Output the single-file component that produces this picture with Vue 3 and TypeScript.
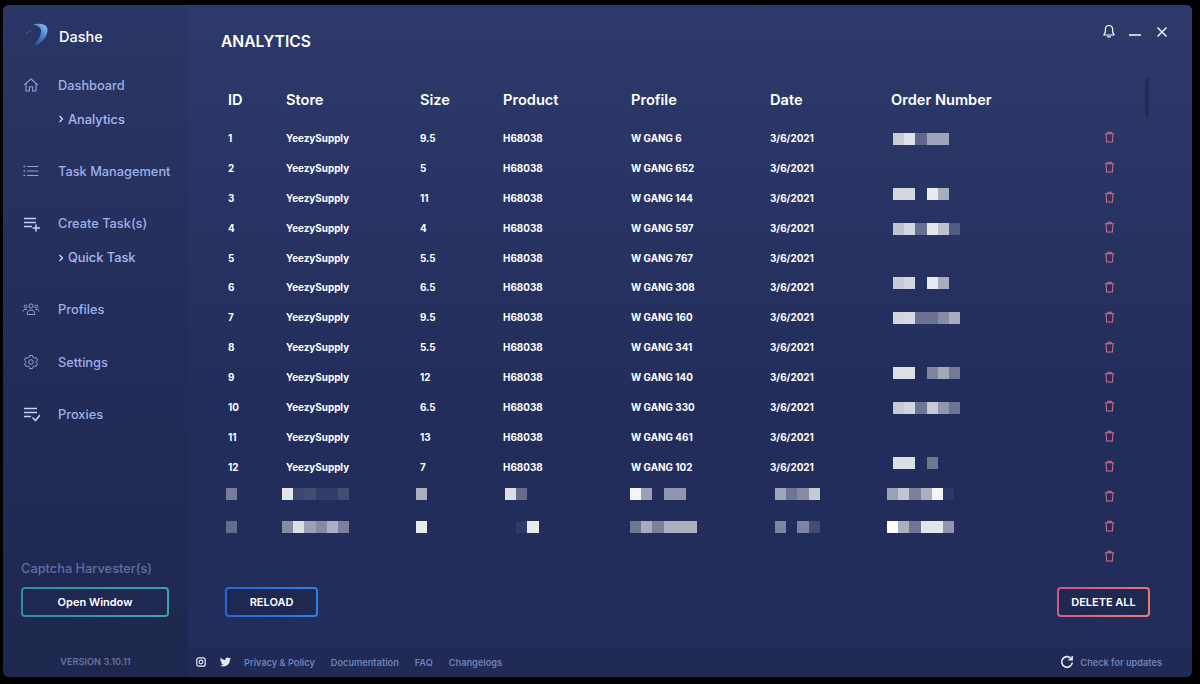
<script setup lang="ts">
interface Mosaic {
  offset: number
  cells: number[]
}

interface Row {
  id: number
  size: string
  profile: string
  order: number[]
  shift?: number
}

const columns = ['ID', 'Store', 'Size', 'Product', 'Profile', 'Date', 'Order Number']

const rows: Row[] = [
  { id: 1, size: '9.5', profile: 'W GANG 6', order: [0.75, 0.85, 0.25, 0.55, 0.55], shift: 1 },
  { id: 2, size: '5', profile: 'W GANG 652', order: [] },
  { id: 3, size: '11', profile: 'W GANG 144', order: [0.8, 0.8, 0, 0.9, 0.6], shift: -4 },
  { id: 4, size: '4', profile: 'W GANG 597', order: [0.7, 0.8, 0.3, 0.88, 0.7, 0.2], shift: 1 },
  { id: 5, size: '5.5', profile: 'W GANG 767', order: [] },
  { id: 6, size: '6.5', profile: 'W GANG 308', order: [0.75, 0.8, 0, 0.9, 0.6], shift: -4 },
  { id: 7, size: '9.5', profile: 'W GANG 160', order: [0.8, 0.82, 0.32, 0.32, 0.45, 0.6], shift: 1 },
  { id: 8, size: '5.5', profile: 'W GANG 341', order: [] },
  { id: 9, size: '12', profile: 'W GANG 140', order: [0.85, 0.85, 0, 0.42, 0.58, 0.36], shift: -4 },
  { id: 10, size: '6.5', profile: 'W GANG 330', order: [0.75, 0.8, 0.35, 0.75, 0.5, 0.35], shift: 1 },
  { id: 11, size: '13', profile: 'W GANG 461', order: [] },
  { id: 12, size: '7', profile: 'W GANG 102', order: [0.85, 0.85, 0, 0.35], shift: -4 }
]

// redacted rows at the end of the table, one mosaic per column
const blurred: { shift: number; cols: Mosaic[] }[] = [
  {
    shift: -3,
    cols: [
      { offset: -2, cells: [0.38] },
      { offset: -4, cells: [0.88, 0.12, 0.15, 0.08, 0.08, 0.15] },
      { offset: -4, cells: [0.62] },
      { offset: 2, cells: [0.85, 0.3] },
      { offset: -1, cells: [0.95, 0.55, 0, 0.5, 0.5] },
      { offset: 5, cells: [0.58, 0.35, 0.45, 0.75] },
      { offset: -4, cells: [0.55, 0.72, 0.4, 0.62, 0.95, 0.05] }
    ]
  },
  {
    shift: 0,
    cols: [
      { offset: -2, cells: [0.3] },
      { offset: -4, cells: [0.45, 0.85, 0.55, 0.45, 0.62, 0.4] },
      { offset: -4, cells: [0.9] },
      { offset: 2, cells: [0, 0.06, 0.9] },
      { offset: -1, cells: [0.35, 0.6, 0.4, 0.62, 0.62, 0.62] },
      { offset: 5, cells: [0.42, 0, 0.42, 0.15] },
      { offset: -4, cells: [1, 0.62, 0.35, 0.88, 0.88, 0.5] }
    ]
  }
]

const nav = [
  { label: 'Dashboard', icon: 'home', sub: 'Analytics' },
  { label: 'Task Management', icon: 'list' },
  { label: 'Create Task(s)', icon: 'add', sub: 'Quick Task' },
  { label: 'Profiles', icon: 'users' },
  { label: 'Settings', icon: 'gear' },
  { label: 'Proxies', icon: 'check' }
]

const links = ['Privacy & Policy', 'Documentation', 'FAQ', 'Changelogs']

function cellColor(alpha: number): string {
  return `rgba(255, 255, 255, ${alpha})`
}
</script>

<template>
  <div class="window">
    <aside class="sidebar">
      <div class="brand">
        <svg class="logo" width="26" height="26" viewBox="0 0 26 26">
          <defs>
            <linearGradient id="swoosh" x1="0.9" y1="0" x2="0.2" y2="1">
              <stop offset="0" stop-color="#8fc0f0" />
              <stop offset="0.5" stop-color="#3f7cc8" />
              <stop offset="1" stop-color="#2a4474" />
            </linearGradient>
          </defs>
          <path d="M9 1.500C15 0 23 0.500 23.500 6.500C24 13 17.500 21 8 24.500C13 18.500 17.500 12.500 17 7.500C16.600 4 13.500 2.500 9 1.500Z" fill="url(#swoosh)" />
          <path d="M1 11C3 9 5.500 7.500 8 7C6 8.500 3.500 10 1 11Z" fill="#46689e" />
        </svg>
        <span>Dashe</span>
      </div>

      <nav class="nav">
        <div v-for="item in nav" :key="item.label" class="nav-group">
          <div class="nav-item">
            <span class="nav-icon">
              <svg v-if="item.icon === 'home'" width="18" height="18" viewBox="0 0 18 18" fill="none" stroke="currentColor" stroke-width="1.100" stroke-linejoin="round" stroke-linecap="round">
                <path d="M2.500 8.600L9 3l6.500 5.600" />
                <path d="M4 7.600V15h3.400v-4.200h3.200V15H14V7.600" />
              </svg>
              <svg v-else-if="item.icon === 'list'" width="18" height="18" viewBox="0 0 18 18" fill="none" stroke="currentColor" stroke-width="1.100" stroke-linecap="round">
                <path d="M5.500 4.500H16M5.500 9H16M5.500 13.500H16" />
                <path d="M2 4.500h.6M2 9h.6M2 13.500h.6" stroke-width="1.400" />
              </svg>
              <svg v-else-if="item.icon === 'add'" width="18" height="18" viewBox="0 0 18 18" fill="none" stroke="#c5d0f2" stroke-width="1.600">
                <path d="M2 3.500h12M2 7.500h12M2 11.500h8M14 9.500v7M10.500 13h7.500" />
              </svg>
              <svg v-else-if="item.icon === 'users'" width="18" height="18" viewBox="0 0 18 18" fill="none" stroke="currentColor" stroke-width="1">
                <circle cx="9" cy="5" r="2.100" />
                <circle cx="3.600" cy="5.600" r="1.500" />
                <circle cx="14.400" cy="5.600" r="1.500" />
                <path d="M5.400 13.500v-1.600c0-1.600 1.200-2.700 2.700-2.700h1.800c1.500 0 2.700 1.100 2.700 2.700v1.600z" />
                <path d="M1 10.500c0-1.200.9-2 2-2h1.600M17 10.500c0-1.200-.9-2-2-2h-1.600" />
              </svg>
              <svg v-else-if="item.icon === 'gear'" width="18" height="18" viewBox="0 0 18 18" fill="none" stroke="currentColor" stroke-width="1" stroke-linejoin="round">
                <circle cx="9" cy="9" r="2.300" />
                <path d="M7.500 2.500h3l.4 1.800 1.400.8 1.800-.6 1.500 2.600-1.400 1.200v1.400l1.400 1.200-1.500 2.600-1.800-.6-1.400.8-.4 1.800h-3l-.4-1.800-1.400-.8-1.800.6-1.500-2.600 1.400-1.200V8.300L2.400 7.100l1.500-2.600 1.800.6 1.400-.8z" />
              </svg>
              <svg v-else width="18" height="18" viewBox="0 0 18 18" fill="none" stroke="#c5d0f2" stroke-width="1.600">
                <path d="M2 3.500h13M2 7.500h13M2 11.500h7M10.500 12.500l3 3 4.500-5.500" />
              </svg>
            </span>
            <span class="nav-label">{{ item.label }}</span>
          </div>
          <div v-if="item.sub" class="nav-sub">
            <svg width="6" height="8" viewBox="0 0 6 8" fill="none" stroke="#d5def7" stroke-width="1.200">
              <path d="M1.500 1l3 3-3 3" />
            </svg>
            <span>{{ item.sub }}</span>
          </div>
        </div>
      </nav>

      <div class="harvester">
        <div class="harvester-title">Captcha Harvester(s)</div>
        <button class="btn btn-teal">Open Window</button>
      </div>
      <div class="version">VERSION 3.10.11</div>
    </aside>

    <main class="main">
      <header class="topbar">
        <h1>ANALYTICS</h1>
        <div class="window-actions">
          <svg class="bell" width="14" height="15" viewBox="0 0 14 15" fill="none" stroke="#fff" stroke-width="1.200" stroke-linejoin="round">
            <path d="M7 1.500c-2.400 0-3.600 1.900-3.600 4v2.600L1.800 11h10.400l-1.600-2.900V5.500c0-2.100-1.200-4-3.600-4z" />
            <path d="M5.600 12.800h2.800" stroke-linecap="round" />
          </svg>
          <svg width="14" height="15" viewBox="0 0 14 15" fill="none" stroke="#fff" stroke-width="1.600">
            <path d="M1 11h12" />
          </svg>
          <svg width="12" height="12" viewBox="0 0 12 12" fill="none" stroke="#fff" stroke-width="1.400">
            <path d="M1.500 1.500l9 9M10.500 1.500l-9 9" />
          </svg>
        </div>
      </header>

      <section class="table-wrap">
        <div class="scroll-thumb"></div>
        <div class="table-row table-head">
          <div v-for="col in columns" :key="col">{{ col }}</div>
        </div>

        <div v-for="row in rows" :key="row.id" class="table-row">
          <div>{{ row.id }}</div>
          <div>YeezySupply</div>
          <div>{{ row.size }}</div>
          <div>H68038</div>
          <div>{{ row.profile }}</div>
          <div>3/6/2021</div>
          <div class="mosaic order-cell" :style="{ marginTop: (row.shift ?? 0) * 2 + 'px' }">
            <i v-for="(c, n) in row.order" :key="n" :style="{ background: cellColor(c) }"></i>
          </div>
          <svg class="trash" width="11" height="12" viewBox="0 0 12 13" fill="none" stroke="#d4708a" stroke-width="1.100">
            <path d="M1 3h10M4.200 3V1.200h3.600V3M2.200 3l.6 9h6.400l.6-9" />
          </svg>
        </div>

        <div v-for="(line, i) in blurred" :key="i" class="table-row">
          <div
            v-for="(m, j) in line.cols"
            :key="j"
            class="mosaic"
            :style="{ marginLeft: m.offset + 'px', marginTop: line.shift * 2 + 'px' }"
          >
            <i v-for="(c, n) in m.cells" :key="n" :style="{ background: cellColor(c) }"></i>
          </div>
          <svg class="trash" width="11" height="12" viewBox="0 0 12 13" fill="none" stroke="#d4708a" stroke-width="1.100">
            <path d="M1 3h10M4.200 3V1.200h3.600V3M2.200 3l.6 9h6.400l.6-9" />
          </svg>
        </div>

        <div class="table-row">
          <svg class="trash trash-last" width="11" height="12" viewBox="0 0 12 13" fill="none" stroke="#d4708a" stroke-width="1.100">
            <path d="M1 3h10M4.200 3V1.200h3.600V3M2.200 3l.6 9h6.400l.6-9" />
          </svg>
        </div>
      </section>

      <div class="actions">
        <button class="btn btn-blue">RELOAD</button>
        <button class="btn btn-pink">DELETE ALL</button>
      </div>

      <footer class="footer">
        <div class="socials">
          <svg width="10" height="10" viewBox="0 0 10 10" fill="none" stroke="#e6ebfa" stroke-width="1.200">
            <rect x="0.800" y="0.800" width="8.400" height="8.400" rx="2" />
            <circle cx="5" cy="5" r="1.800" />
          </svg>
          <svg width="11" height="10" viewBox="0 0 24 20" fill="#e6ebfa">
            <path d="M24 2.400a10 10 0 0 1-2.800.8A4.900 4.900 0 0 0 23.300.5a9.800 9.800 0 0 1-3.100 1.200A4.900 4.900 0 0 0 11.800 6.200 13.900 13.900 0 0 1 1.700.9a4.900 4.900 0 0 0 1.500 6.600 4.900 4.900 0 0 1-2.200-.6c0 2.400 1.700 4.500 3.900 5a4.900 4.900 0 0 1-2.200.1 4.900 4.900 0 0 0 4.600 3.400A9.900 9.900 0 0 1 0 17.400 13.900 13.900 0 0 0 7.500 19.600c9.100 0 14.300-7.700 14-14.600A10 10 0 0 0 24 2.400z" />
          </svg>
        </div>
        <a v-for="link in links" :key="link" class="foot-link">{{ link }}</a>
        <div class="updates">
          <svg width="14" height="14" viewBox="0 0 14 14" fill="none" stroke="#e6ebfa" stroke-width="1.600">
            <path d="M11.600 4.200A5.300 5.300 0 1 0 12.300 7.500" />
            <path d="M12.200 1v3.800H8.400" stroke-width="1.400" />
          </svg>
          <span>Check for updates</span>
        </div>
      </footer>
    </main>
  </div>
</template>

<style>
html,
body {
  margin: 0;
  background: #000;
}
</style>

<style scoped>
.window {
  width: 1189px;
  height: 672px;
  margin: 5px 0 0 3px;
  display: flex;
  border-radius: 6px;
  overflow: hidden;
  font-family: Inter, "Liberation Sans", sans-serif;
  background: #222c59;
}

.sidebar {
  width: 185px;
  flex-shrink: 0;
  display: flex;
  flex-direction: column;
  background: linear-gradient(180deg, #2a3665 0%, #232d5a 50%, #1e274d 100%);
}

.brand {
  height: 63px;
  display: flex;
  align-items: center;
  gap: 9px;
  padding-left: 21px;
  color: #fff;
  font-size: 14.5px;
  font-weight: 500;
}

.logo {
  margin-top: -2px;
}

.nav {
  display: flex;
  flex-direction: column;
  gap: 18.3px;
}

.nav-item {
  height: 34px;
  display: flex;
  align-items: center;
  color: #9fb0e6;
  font-size: 12.8px;
  font-weight: 500;
  padding-left: 19px;
}

.nav-icon {
  width: 36px;
  height: 18px;
  display: flex;
  color: #8fa2dc;
}

.nav-sub {
  height: 34px;
  display: flex;
  align-items: center;
  gap: 4px;
  padding-left: 55px;
  color: #a9b9ee;
  font-size: 12.8px;
  font-weight: 500;
}

.harvester {
  margin-top: auto;
  padding: 0 18px;
}

.harvester-title {
  color: #5f6fa8;
  font-size: 12.8px;
  font-weight: 500;
  margin-bottom: 11px;
}

.version {
  height: 60px;
  display: flex;
  align-items: center;
  justify-content: center;
  padding-top: 28px;
  box-sizing: border-box;
  color: #6373a6;
  font-size: 9.2px;
  font-weight: 600;
}

.main {
  flex: 1;
  min-width: 0;
  display: flex;
  flex-direction: column;
  background: linear-gradient(180deg, #2d3a6b 0%, #28336300 60%), #232d5b;
}

.topbar {
  height: 72px;
  display: flex;
  justify-content: space-between;
  align-items: flex-start;
  padding: 0 24px 0 33px;
  flex-shrink: 0;
}

.topbar h1 {
  margin: 28px 0 0;
  color: #fff;
  font-size: 15.6px;
  font-weight: 600;
  line-height: 18px;
}

.window-actions {
  display: flex;
  gap: 14px;
  align-items: center;
  padding-top: 19px;
}

.bell {
  margin-right: -2px;
}

.table-wrap {
  position: relative;
  height: 492px;
  overflow: hidden;
  padding-left: 40px;
}

.scroll-thumb {
  position: absolute;
  top: 1px;
  left: 957px;
  width: 4px;
  height: 40px;
  border-radius: 2px;
  background: #222d59;
}

.table-row {
  display: grid;
  grid-template-columns: 58px 134px 83px 128px 139px 121px 213px 12px;
  height: 29.9px;
  align-items: center;
  color: #fff;
  font-size: 9.9px;
  font-weight: 700;
  white-space: nowrap;
}

.table-head {
  height: 46px;
  font-size: 14.6px;
  font-weight: 600;
}

.mosaic {
  display: flex;
  height: 12px;
}

.mosaic i {
  width: 11.2px;
  height: 12px;
}

.order-cell {
  margin-left: 2px;
}

.trash {
  display: block;
  margin-top: -1px;
}

.trash-last {
  grid-column: 8;
}

.actions {
  display: flex;
  justify-content: space-between;
  padding: 22px 42px 0 37px;
  height: 60px;
  flex-shrink: 0;
}

.btn {
  height: 30px;
  border: 2px solid transparent;
  border-radius: 4px;
  color: #fff;
  font-family: inherit;
  font-size: 11px;
  font-weight: 600;
  padding: 0;
  cursor: pointer;
  background-origin: border-box;
  background-clip: padding-box, border-box;
}

.btn-teal {
  width: 148px;
  display: block;
  background-image: linear-gradient(#1f2851, #1f2851), linear-gradient(90deg, #2f8f9c, #35a6ab);
}

.btn-blue {
  width: 93px;
  background-image: linear-gradient(#1f2851, #1f2851), linear-gradient(90deg, #2468dc, #2a80e8);
}

.btn-pink {
  width: 93px;
  background-image: linear-gradient(#1f2851, #1f2851), linear-gradient(135deg, #d6508a, #ea7f6a);
}

.footer {
  margin-top: auto;
  height: 30px;
  flex-shrink: 0;
  display: flex;
  align-items: center;
  padding: 0 30px 0 8px;
  background: #202a55;
  font-size: 9.2px;
  font-weight: 600;
  color: #6f80b8;
}

.socials {
  display: flex;
  align-items: center;
  gap: 14px;
  margin-right: 13px;
}

.foot-link {
  margin-right: 16px;
}

.updates {
  margin-left: auto;
  display: flex;
  align-items: center;
  gap: 6px;
}
</style>
